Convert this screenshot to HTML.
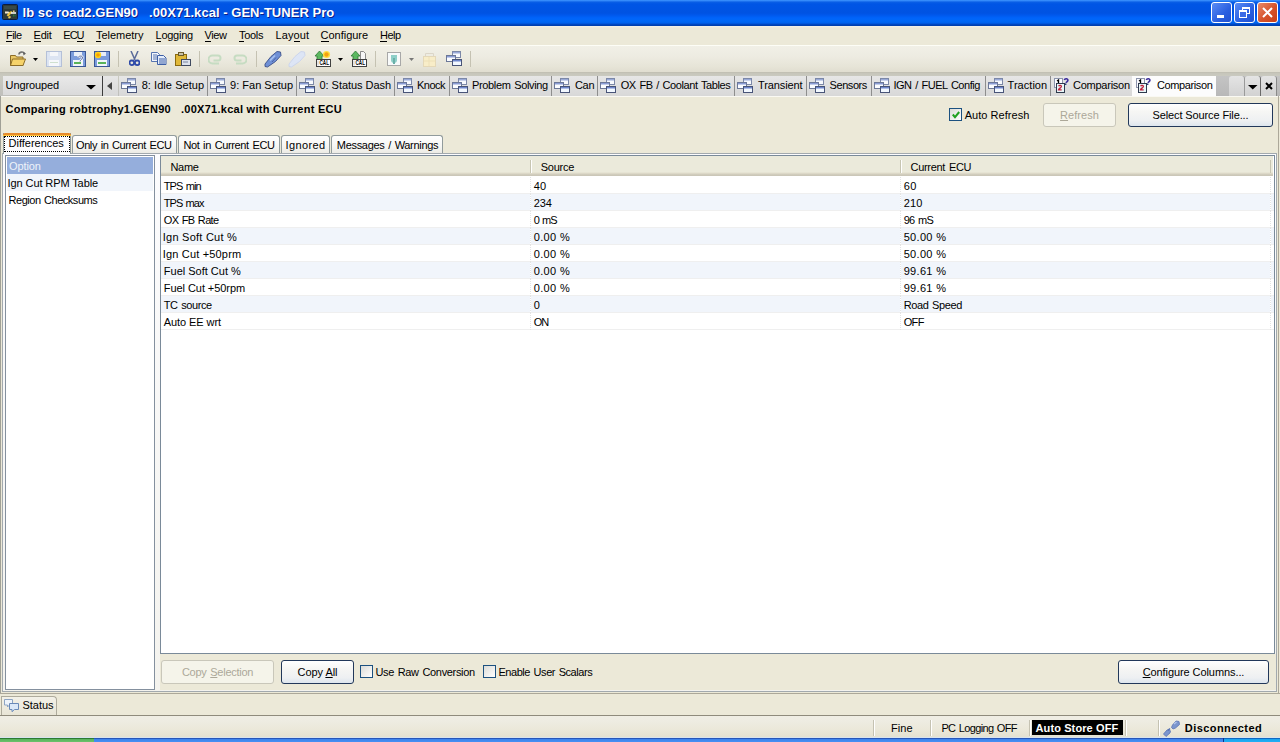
<!DOCTYPE html>
<html><head><meta charset="utf-8">
<style>
*{box-sizing:border-box;margin:0;padding:0}
html,body{width:1280px;height:742px;overflow:hidden}
body{position:relative;background:#ECE9D8;font-family:"Liberation Sans",sans-serif;font-size:11px;color:#000}
.a{position:absolute}
.t{position:absolute;white-space:nowrap;line-height:13px}
#title{left:0;top:0;width:1280px;height:26px;
background:linear-gradient(#3D95FF 0px,#2C80F5 1px,#0A5FE6 2px,#0055E5 4px,#0053E2 13px,#0058EC 15px,#0064FA 18px,#0068F7 21px,#0062EC 23px,#004ED0 24px,#0040B0 25px,#0040B0 26px)}
#menu{left:0;top:26px;width:1280px;height:19px;background:linear-gradient(#F4F3EC 0px,#ECE9D8 2px,#ECE9D8 100%)}
#tool{left:0;top:45px;width:1280px;height:27px;background:linear-gradient(#FDFDF6 0px,#FDFDF6 1px,#F1F0E7 1px,#EDEBE1 12px,#E6E4D7 22px,#E0DDD0 27px)}
#tabstrip{left:0;top:72px;width:1280px;height:24px;background:linear-gradient(#BDBBAE 0px,#C6C5BA 1px,#CACAC0 4px,#C0C0BC 24px)}
.tsep{position:absolute;width:1px;top:0;height:26px}
.mt{top:29px}
.mt u{text-decoration:none;border-bottom:1px solid #000}
.tab{position:absolute;top:76px;height:20px;background:linear-gradient(#E6E6E6,#D8D8D8)}
.tabsep{position:absolute;top:76px;height:20px;width:1px;background:#8E8E8E}
.tabt{position:absolute;top:79px;white-space:nowrap;line-height:13px}
.tico{position:absolute;top:76px;width:20px;height:20px}
.btn{position:absolute;border:1px solid #22385A;border-radius:3px;background:linear-gradient(#FFFFFF,#F6F6F4 35%,#EEF0F2 75%,#DEE6EE);text-align:center;line-height:20px;padding-top:1px}
.btn.dis{border-color:#C9C7BA;background:#F5F4EA;color:#ACA899}
.chk{position:absolute;width:13px;height:13px;border:1px solid #1C5180;background:linear-gradient(135deg,#DCDCD7,#FFFFFF)}
.itab{position:absolute;top:135px;height:18px;border:1px solid #919B9C;border-bottom:none;border-radius:3px 3px 0 0;background:linear-gradient(#FFFFFF,#F6F6F3 60%,#ECEBE5)}
.sbs{position:absolute;top:720px;width:2px;height:16px;border-left:1px solid #C5C2B2;border-right:1px solid #FFFFFF}
.row{position:absolute;left:161px;width:1113px;height:17px;border-bottom:1px solid #EFEFEF}
.row.alt{background:#F1F5FB}
.c{position:absolute;top:3px;white-space:nowrap;line-height:13px}
.vl{position:absolute;top:0;width:1px;height:17px;background:repeating-linear-gradient(#E4E4E4 0 1px,#fff 1px 2px)}
</style></head><body>
<svg width="0" height="0" style="position:absolute"><defs>
<symbol id="win" viewBox="0 0 20 20">
<rect x="8.5" y="2.5" width="8" height="6" fill="#F8FAFE" stroke="#7C88A8"></rect><rect x="9" y="3" width="7" height="1.5" fill="#9AAAD8"></rect>
<rect x="2.5" y="6.5" width="9" height="6" fill="#FAFCFF" stroke="#6C7898"></rect><rect x="3" y="7" width="8" height="1.5" fill="#8A9CD4"></rect>
<rect x="8.5" y="10.5" width="9" height="6" fill="#F2F8FF" stroke="#485478"></rect><rect x="9" y="11" width="8" height="1.5" fill="#6E86CC"></rect>
</symbol>
<symbol id="cmp" viewBox="0 0 20 20">
<rect x="2.5" y="2.5" width="8" height="9" fill="#FAFBFF" stroke="#8C94AC"></rect><path d="M5 5l1.5-1v3" stroke="#000" stroke-width="1.3" fill="none"></path>
<rect x="4.5" y="7.5" width="8" height="9" fill="#E8F6F8" stroke="#2E3A4E"></rect><path d="M6.6 10.2c0.6-1.3 2.9-1.1 2.8 0.3-0.1 1.2-2.6 2-2.9 3.3h3.2" stroke="#C0203A" stroke-width="1.3" fill="none"></path>
<path d="M12.3 4c0.5-1.8 3.8-1.6 3.6 0.4-0.1 1.2-1.6 1.4-2 2.4" stroke="#3A2A9A" stroke-width="1.6" fill="none"></path><rect x="12.8" y="7.5" width="1.6" height="1.4" fill="#1A2A6A"></rect>
</symbol>
</defs></svg>
<!-- ============ TITLE BAR ============ -->
<div id="title" class="a">
 <svg class="a" style="left:2px;top:4px" width="17" height="16"><rect x="0.5" y="0.5" width="15" height="15" rx="1" fill="#2E3A38" stroke="#0A1A40"></rect><rect x="2" y="2" width="12" height="3" fill="#3A4A48"></rect>
<path d="M3 8.5h3l1.5 1" stroke="#F4E8D0" stroke-width="2"></path><path d="M5.5 12l2.5-3 2-1" stroke="#E8C040" stroke-width="2.2"></path><path d="M9 9h5" stroke="#F0F0F0" stroke-width="1.6"></path><path d="M11 7.5l1.5-0.5" stroke="#E8D080" stroke-width="1.5"></path><path d="M6.5 14l2-1.5" stroke="#F0C850" stroke-width="1.6"></path><path d="M11.5 10.5v2M13 10.5v2" stroke="#2A7A3A" stroke-width="1"></path></svg>
 <div class="t" style="left: 22.6px; top: 5px; font: bold 13px / 16px &quot;Liberation Sans&quot;, sans-serif; color: rgb(255, 255, 255); text-shadow: rgb(10, 30, 140) 1px 1px 0px; letter-spacing: 0.037px;">lb sc road2.GEN90 &nbsp; .00X71.kcal - GEN-TUNER Pro</div>
 <div class="a" style="left:1211px;top:2px;width:21px;height:21px;border:1px solid #fff;border-radius:3px;background:linear-gradient(135deg,#5A8CF5,#2A5FE0 60%,#2050D0)"><div class="a" style="left:5px;top:12px;width:7px;height:3px;background:#fff"></div></div>
 <div class="a" style="left:1234px;top:2px;width:21px;height:21px;border:1px solid #fff;border-radius:3px;background:linear-gradient(135deg,#5A8CF5,#2A5FE0 60%,#2050D0)">
   <div class="a" style="left:7px;top:4px;width:8px;height:7px;border:1px solid #fff;border-top-width:2px"></div>
   <div class="a" style="left:4px;top:7px;width:8px;height:8px;border:1px solid #fff;border-top-width:2px;background:#3A6AE6"></div>
 </div>
 <div class="a" style="left:1257px;top:2px;width:21px;height:21px;border:1px solid #fff;border-radius:3px;background:linear-gradient(135deg,#E88A6A,#D6532A 55%,#C8401A)">
   <svg class="a" style="left:3px;top:3px" width="13" height="13"><path d="M2 2L11 11M11 2L2 11" stroke="#fff" stroke-width="2"></path></svg>
 </div>
</div>
<!-- ============ MENU ============ -->
<div id="menu" class="a"></div>
<div class="t mt" style="left: 6px; letter-spacing: -0.536px;"><u>F</u>ile</div>
<div class="t mt" style="left: 33.6px; letter-spacing: -0.233px;"><u>E</u>dit</div>
<div class="t mt" style="left: 63.3px; letter-spacing: -0.99px;">EC<u>U</u></div>
<div class="t mt" style="left: 96px; letter-spacing: -0.022px;"><u>T</u>elemetry</div>
<div class="t mt" style="left: 155.5px; letter-spacing: -0.255px;"><u>L</u>ogging</div>
<div class="t mt" style="left: 204.6px; letter-spacing: -0.433px;"><u>V</u>iew</div>
<div class="t mt" style="left: 239px; letter-spacing: -0.295px;"><u>T</u>ools</div>
<div class="t mt" style="left: 275.4px; letter-spacing: 0.126px;">Lay<u>o</u>ut</div>
<div class="t mt" style="left: 320.6px; letter-spacing: -0.022px;"><u>C</u>onfigure</div>
<div class="t mt" style="left: 380px; letter-spacing: -0.502px;"><u>H</u>elp</div>
<!-- ============ TOOLBAR ============ -->
<div id="tool" class="a"></div>
<div id="toolicons">
<svg class="a" style="left:9px;top:50px" width="18" height="17">
 <path d="M1.5 5.5h5l1 1.5h6.5v8.5h-12.5z" fill="#E9C765" stroke="#8C6D28"></path>
 <path d="M3.5 9h13l-2.5 6.5h-12.5z" fill="#F6D36A" stroke="#8C6D28"></path>
 <path d="M10 4.5c0-2.5 4-3.5 5.5-1" stroke="#707070" stroke-width="1.6" fill="none"></path><path d="M14 2l3 1.5-2.5 2z" fill="#606060"></path>
</svg>
<svg class="a" style="left:33px;top:58px" width="6" height="4"><path d="M0 0H5L2.5 3Z" fill="#000"></path></svg>
<svg class="a" style="left:46px;top:51px" width="16" height="16"><rect x="0.5" y="0.5" width="15" height="15" fill="#DCE4F2" stroke="#B4C0D8"></rect><rect x="4" y="1" width="8" height="4" fill="#F4F6FA"></rect><rect x="3" y="9" width="10" height="6" fill="#F6F8FB"></rect><rect x="4" y="11" width="8" height="1" fill="#CFE0CF"></rect></svg>
<svg class="a" style="left:70px;top:51px" width="16" height="16"><rect x="0.5" y="0.5" width="15" height="15" fill="#7B9CDC" stroke="#3A5796"></rect><rect x="4" y="1" width="8" height="4" fill="#E8EEF8"></rect><rect x="3" y="9" width="10" height="6" fill="#F2F6FA"></rect><rect x="4" y="11" width="7" height="2" fill="#5AB45A"></rect><path d="M8 6.5c1-2 5-2 4.5 0.5-0.3 1.5-2.5 1.8-2.5 3.5" stroke="#fff" stroke-width="2.2" fill="none"></path><path d="M8 6.5c1-2 5-2 4.5 0.5-0.3 1.5-2.5 1.8-2.5 3.5" stroke="#2A3F80" stroke-width="0.8" fill="none"></path></svg>
<svg class="a" style="left:94px;top:51px" width="16" height="16"><rect x="0.5" y="0.5" width="15" height="15" fill="#7B9CDC" stroke="#3A5796"></rect><rect x="4" y="1" width="8" height="4" fill="#E8EEF8"></rect><rect x="3" y="9" width="10" height="6" fill="#F2F6FA"></rect><rect x="4" y="11" width="8" height="2" fill="#5AB45A"></rect><circle cx="4" cy="4" r="3.2" fill="#FFD21A"></circle><circle cx="4" cy="4" r="1.8" fill="#F5A000"></circle></svg>
<div class="a" style="left:118px;top:51px;width:1px;height:16px;background:#C5C2B2"></div>
<svg class="a" style="left:129px;top:51px" width="11" height="15"><path d="M2 0L6 9M9 0L5 9" stroke="#5A6A9A" stroke-width="1.5"></path><circle cx="2.8" cy="11.8" r="2.3" fill="none" stroke="#2F4BA8" stroke-width="1.8"></circle><circle cx="8.2" cy="11.8" r="2.3" fill="none" stroke="#2F4BA8" stroke-width="1.8"></circle></svg>
<svg class="a" style="left:151px;top:52px" width="16" height="13"><path d="M0.5 0.5h6l2 2v7h-8z" fill="#F2F5FB" stroke="#5674B0"></path><path d="M2 3h4M2 5h5M2 7h5" stroke="#5674B0"></path><path d="M6.5 3.5h6l2.5 2.5v6.5h-8.5z" fill="#E6EEFB" stroke="#3D5FA6"></path><path d="M8 7h6M8 9h6M8 11h6" stroke="#3D5FA6"></path></svg>
<svg class="a" style="left:175px;top:52px" width="17" height="14"><rect x="0.5" y="2.5" width="11" height="11" fill="#E0B838" stroke="#8A6A10"></rect><rect x="3.5" y="0.5" width="5" height="3" fill="#C9C2A8" stroke="#6A5A2A"></rect><rect x="6.5" y="7.5" width="9" height="6" fill="#DCE2EC" stroke="#404A60"></rect><path d="M8 10h5" stroke="#7A86A0"></path></svg>
<div class="a" style="left:199px;top:51px;width:1px;height:16px;background:#C5C2B2"></div>
<svg class="a" style="left:208px;top:53px" width="15" height="12"><path d="M11 10.5H4.5a4 4 0 0 1 0-8H10a2.5 2.5 0 0 1 0 5H5.5" stroke="#C6DCC2" stroke-width="2" fill="none"></path></svg>
<svg class="a" style="left:232px;top:53px" width="15" height="12"><path d="M4 10.5h6.5a4 4 0 0 0 0-8H5a2.5 2.5 0 0 0 0 5h4.5" stroke="#C6DCC2" stroke-width="2" fill="none"></path></svg>
<div class="a" style="left:256px;top:51px;width:1px;height:16px;background:#C5C2B2"></div>
<svg class="a" style="left:262px;top:48px" width="24" height="22"><path d="M3 16L9 8.5 15 3.5 18.5 4 19 7.5 13.5 13.5 5.5 19 3 18.5z" fill="#6F90D6" stroke="#3A4E88" stroke-width="0.9"></path><path d="M8 12.5l5-5" stroke="#A8C2F0" stroke-width="1.6"></path><path d="M10 14l4-4.5" stroke="#4A64A8" stroke-width="1"></path></svg>
<svg class="a" style="left:286px;top:48px" width="24" height="22"><path d="M3 16L9 8.5 15 3.5 18.5 4 19 7.5 13.5 13.5 5.5 19 3 18.5z" fill="#DDE5F5" stroke="#C9D4EC" stroke-width="0.9"></path></svg>
<svg class="a" style="left:312px;top:48px" width="24" height="22"><path d="M7.5 3L12 8H10V12H5V8H3z" fill="#5CB860" stroke="#2E7A36" stroke-width="0.8"></path><circle cx="14.5" cy="6.5" r="3.6" fill="#FFE040"></circle><circle cx="14.5" cy="6.5" r="2.2" fill="#F5A010"></circle><rect x="4.5" y="11.5" width="14" height="7" fill="#FFFFFF" stroke="#404040"></rect><path d="M6 12.5v5" stroke="#C8C8C8"></path><text x="7.5" y="17.2" font-family="Liberation Sans" font-size="6.5" font-weight="bold" fill="#000" textLength="9.5" lengthAdjust="spacingAndGlyphs">CAL</text></svg>
<svg class="a" style="left:338px;top:58px" width="6" height="4"><path d="M0 0H5L2.5 3Z" fill="#000"></path></svg>
<svg class="a" style="left:348px;top:48px" width="24" height="22"><path d="M7.5 3L12 8H10V12H5V8H3z" fill="#5CB860" stroke="#2E7A36" stroke-width="0.8"></path><path d="M12.5 3.5h3l2 2v6h-5z" fill="#F6F6F6" stroke="#707070" stroke-width="0.8"></path><rect x="4.5" y="11.5" width="14" height="7" fill="#FFFFFF" stroke="#404040"></rect><path d="M6 12.5v5" stroke="#C8C8C8"></path><text x="7.5" y="17.2" font-family="Liberation Sans" font-size="6.5" font-weight="bold" fill="#000" textLength="9.5" lengthAdjust="spacingAndGlyphs">CAL</text></svg>
<div class="a" style="left:375px;top:51px;width:1px;height:16px;background:#C5C2B2"></div>
<svg class="a" style="left:387px;top:52px" width="15" height="14"><rect x="0.5" y="0.5" width="13" height="13" fill="#F8FAFA" stroke="#A8A8A8"></rect><path d="M4 3v5a3 3 0 0 0 6 0V3z" fill="#8ECFC8"></path><path d="M7 6v6" stroke="#6AB0A8" stroke-width="2"></path></svg>
<svg class="a" style="left:409px;top:58px" width="6" height="4"><path d="M0 0H5L2.5 3Z" fill="#777"></path></svg>
<svg class="a" style="left:423px;top:51px" width="14" height="16"><rect x="0.5" y="5.5" width="12" height="10" fill="#F8EDC8" stroke="#E4D8B8"></rect><path d="M2.5 5.5V2.5h8v3" fill="none" stroke="#DCD6C8"></path><path d="M1 10h11M6 6v9" stroke="#EDE0B8"></path></svg>
<svg class="a" style="left:444px;top:49px" width="20" height="20"><use href="#win" width="20" height="20"></use></svg>
<div class="a" style="left:470px;top:51px;width:1px;height:16px;background:#C5C2B2"></div>
</div>
<!-- ============ TAB STRIP ============ -->
<div id="tabstrip" class="a"></div>
<!-- combo -->
<div class="a" style="left:3px;top:76px;width:99px;height:19px;background:linear-gradient(#E9E9E9,#DADADA)"></div>
<div class="t" style="left: 5.6px; top: 79px; letter-spacing: -0.114px;">Ungrouped</div>
<svg class="a" style="left:86px;top:85px" width="10" height="5"><path d="M0 0H10L5 4.5Z" fill="#000"></path></svg>
<div class="a" style="left:102px;top:76px;width:1px;height:20px;background:#3C3C3C"></div>
<div class="a" style="left:103px;top:76px;width:15px;height:20px;background:linear-gradient(#E6E6E6,#D8D8D8)"></div>
<svg class="a" style="left:107px;top:82px" width="6" height="9"><path d="M5 0V8L0 4Z" fill="#444"></path></svg>
<!--TABS--><div class="tab" style="left:119px;width:88px"></div><div class="tabsep" style="left:207px"></div><svg class="tico" style="left:119px"><use href="#win"></use></svg><div class="tabt" style="left: 141.7px; letter-spacing: 0.054px;">8: Idle Setup</div>
<div class="tab" style="left:208px;width:88px"></div><div class="tabsep" style="left:296px"></div><svg class="tico" style="left:208px"><use href="#win"></use></svg><div class="tabt" style="left: 230px; letter-spacing: 0.012px;">9: Fan Setup</div>
<div class="tab" style="left:297px;width:97px"></div><div class="tabsep" style="left:394px"></div><svg class="tico" style="left:297px"><use href="#win"></use></svg><div class="tabt" style="left: 319.5px; letter-spacing: -0.041px;">0: Status Dash</div>
<div class="tab" style="left:395px;width:54px"></div><div class="tabsep" style="left:449px"></div><svg class="tico" style="left:395px"><use href="#win"></use></svg><div class="tabt" style="left: 417px; letter-spacing: -0.518px;">Knock</div>
<div class="tab" style="left:450px;width:101px"></div><div class="tabsep" style="left:551px"></div><svg class="tico" style="left:450px"><use href="#win"></use></svg><div class="tabt" style="left: 472px; letter-spacing: -0.355px; word-spacing: 1px;">Problem Solving</div>
<div class="tab" style="left:552px;width:45px"></div><div class="tabsep" style="left:597px"></div><svg class="tico" style="left:552px"><use href="#win"></use></svg><div class="tabt" style="left: 575px; letter-spacing: -0.331px;">Can</div>
<div class="tab" style="left:598px;width:136px"></div><div class="tabsep" style="left:734px"></div><svg class="tico" style="left:598px"><use href="#win"></use></svg><div class="tabt" style="left: 620.7px; letter-spacing: -0.416px; word-spacing: 1px;">OX FB / Coolant Tables</div>
<div class="tab" style="left:735px;width:71px"></div><div class="tabsep" style="left:806px"></div><svg class="tico" style="left:735px"><use href="#win"></use></svg><div class="tabt" style="left: 758px; letter-spacing: -0.111px;">Transient</div>
<div class="tab" style="left:807px;width:64px"></div><div class="tabsep" style="left:871px"></div><svg class="tico" style="left:807px"><use href="#win"></use></svg><div class="tabt" style="left: 829.6px; letter-spacing: -0.442px;">Sensors</div>
<div class="tab" style="left:872px;width:113px"></div><div class="tabsep" style="left:985px"></div><svg class="tico" style="left:872px"><use href="#win"></use></svg><div class="tabt" style="left: 893.4px; letter-spacing: -0.455px; word-spacing: 1px;">IGN / FUEL Config</div>
<div class="tab" style="left:986px;width:64px"></div><div class="tabsep" style="left:1050px"></div><svg class="tico" style="left:986px"><use href="#win"></use></svg><div class="tabt" style="left: 1007.6px; letter-spacing: 0.027px;">Traction</div>
<div class="tab" style="left:1051px;width:81px"></div><div class="tabsep" style="left:1132px"></div><svg class="tico" style="left:1052px"><use href="#cmp"></use></svg><div class="tabt" style="left: 1073px; letter-spacing: -0.243px;">Comparison</div>
<div class="a" style="left:1132px;top:76px;width:84px;height:20px;background:#FCFCFC"></div><svg class="tico" style="left:1134px"><use href="#cmp"></use></svg><div class="tabt" style="left: 1157px; letter-spacing: -0.387px;">Comparison</div><!--/TABS-->
<div class="a" style="left:1216px;top:76px;width:64px;height:20px;background:linear-gradient(#C4C4C4,#B8B8B8)"></div>
<div class="a" style="left:1229px;top:76px;width:16px;height:20px;background:linear-gradient(#E4E4E4,#D2D2D2);border-radius:3px 3px 0 0;border-right:1px solid #9A9A9A"></div>
<div class="a" style="left:1245px;top:76px;width:16px;height:20px;background:linear-gradient(#E4E4E4,#D2D2D2);border-radius:3px 3px 0 0;border-right:1px solid #6A6A6A"></div>
<svg class="a" style="left:1248px;top:85px" width="10" height="5"><path d="M0 0H9.5L4.75 4.5Z" fill="#000"></path></svg>
<div class="a" style="left:1261px;top:76px;width:16px;height:20px;background:linear-gradient(#E4E4E4,#D2D2D2);border-radius:3px 3px 0 0;border-right:1px solid #8A8A8A"></div>
<svg class="a" style="left:1265px;top:82px" width="8" height="8"><path d="M1 1L7 7M7 1L1 7" stroke="#000" stroke-width="2"></path></svg>
<!-- ============ CONTENT ============ -->
<div class="a" style="left:0;top:96px;width:1280px;height:1px;background:#FAF9F3"></div>
<div class="a" style="left:0;top:96px;width:1px;height:597px;background:#A0A096"></div>
<div class="t" style="left: 5.6px; top: 103px; font-weight: bold; letter-spacing: 0.272px;">Comparing robtrophy1.GEN90 &nbsp; .00X71.kcal with Current ECU</div>
<div class="chk" style="left:949px;top:108px"></div>
<div class="t" style="left: 964.7px; top: 109px; letter-spacing: 0.038px;">Auto Refresh</div>
<svg class="a" style="left:952px;top:111px" width="8" height="8"><path d="M0.8 3.5L3 6.2L7.2 1" stroke="#21A121" stroke-width="2" fill="none"></path></svg>
<div class="btn dis" style="left: 1043px; top: 103px; width: 73px; height: 24px; letter-spacing: 0.05px;"><u>R</u>efresh</div>
<div class="btn" style="left: 1128px; top: 103px; width: 145px; height: 24px; letter-spacing: -0.114px;">Select Source File...</div>

<!-- tab page -->
<div class="a" style="left:2px;top:153px;width:1275px;height:539px;border:1px solid #A2A9AE;background:linear-gradient(#FCFCFE,#F4F3EE)"></div>
<div id="innertabs">
<div class="itab" style="left:72px;width:105px"></div><div class="t" style="left: 76px; top: 139px; letter-spacing: -0.406px; word-spacing: 1px;">Only in Current ECU</div>
<div class="itab" style="left:178px;width:102px"></div><div class="t" style="left: 183.4px; top: 139px; letter-spacing: -0.365px; word-spacing: 1px;">Not in Current ECU</div>
<div class="itab" style="left:281px;width:49px"></div><div class="t" style="left: 285.6px; top: 139px; letter-spacing: 0.385px;">Ignored</div>
<div class="itab" style="left:331px;width:112px"></div><div class="t" style="left: 336.8px; top: 139px; letter-spacing: -0.314px; word-spacing: 1px;">Messages / Warnings</div>
<div class="a" style="left:3px;top:133px;width:68px;height:21px;border:1px solid #919B9C;border-top:none;border-bottom:none;background:#FCFCFE"></div>
<div class="a" style="left:3px;top:133px;width:68px;height:2px;background:#E68B2C;border-radius:2px 2px 0 0"></div>
<div class="a" style="left:3px;top:135px;width:68px;height:1px;background:#FFC73C"></div>
<div class="a" style="left:4px;top:136px;width:66px;height:16px;border:1px dotted #000"></div>
<div class="t" style="left: 8.6px; top: 137px; letter-spacing: -0.024px;">Differences</div>
</div>

<!-- list -->
<div class="a" style="left:5px;top:155px;width:150px;height:535px;border:1px solid #84909E;background:#fff"></div>
<div class="a" style="left:7px;top:157px;width:146px;height:17px;background:#95AEDC"></div>
<div class="t" style="left: 9px; top: 160px; color: rgb(238, 243, 250); letter-spacing: -0.098px;">Option</div>
<div class="a" style="left:7px;top:174px;width:146px;height:17px;background:#F1F5FB"></div>
<div class="t" style="left: 7.6px; top: 177px; letter-spacing: -0.1px;">Ign Cut RPM Table</div>
<div class="t" style="left: 8.6px; top: 194px; letter-spacing: -0.485px; word-spacing: 1px;">Region Checksums</div>

<!-- grid -->
<div class="a" style="left:160px;top:155px;width:1115px;height:499px;border:1px solid #7A8A99;background:#fff"></div>
<div class="a" style="left:161px;top:156px;width:1112px;height:20px;background:linear-gradient(#EBEADB 0,#EBEADB 16px,#E2DECD 17px,#D6D2C2 18px,#CBC7B8 19px)"></div>
<div class="a" style="left:530px;top:160px;width:1px;height:13px;background:#C7C5B2"></div>
<div class="a" style="left:531px;top:160px;width:1px;height:13px;background:#FFF"></div>
<div class="a" style="left:900px;top:160px;width:1px;height:13px;background:#C7C5B2"></div>
<div class="a" style="left:901px;top:160px;width:1px;height:13px;background:#FFF"></div>
<div class="a" style="left:1270px;top:160px;width:1px;height:13px;background:#C7C5B2"></div>
<div class="t" style="left: 170.5px; top: 161px; letter-spacing: -0.342px;">Name</div>
<div class="t" style="left: 540.7px; top: 161px; letter-spacing: -0.247px;">Source</div>
<div class="t" style="left: 910.5px; top: 161px; letter-spacing: -0.292px; word-spacing: 1px;">Current ECU</div>
<!--ROWS--><div class="row" style="top:177px"><div class="c" style="left: 2.8px; letter-spacing: -0.893px; word-spacing: 1px;">TPS min</div><div class="vl" style="left:369px"></div><div class="c" style="left: 372.7px; letter-spacing: 0.182px;">40</div><div class="vl" style="left:739px"></div><div class="c" style="left: 742.7px; letter-spacing: 0.382px;">60</div><div class="vl" style="left:1109px"></div></div>
<div class="row alt" style="top:194px"><div class="c" style="left: 2.8px; letter-spacing: -0.922px; word-spacing: 1px;">TPS max</div><div class="vl" style="left:369px"></div><div class="c" style="left: 372.7px; letter-spacing: -0.118px;">234</div><div class="vl" style="left:739px"></div><div class="c" style="left: 742.7px; letter-spacing: 0.182px;">210</div><div class="vl" style="left:1109px"></div></div>
<div class="row" style="top:211px"><div class="c" style="left: 2.8px; letter-spacing: -0.664px; word-spacing: 1px;">OX FB Rate</div><div class="vl" style="left:369px"></div><div class="c" style="left: 372.7px; letter-spacing: -0.912px; word-spacing: 1px;">0 mS</div><div class="vl" style="left:739px"></div><div class="c" style="left: 742.7px; letter-spacing: -0.689px; word-spacing: 1px;">96 mS</div><div class="vl" style="left:1109px"></div></div>
<div class="row alt" style="top:228px"><div class="c" style="left: 1.8px; letter-spacing: 0.235px;">Ign Soft Cut %</div><div class="vl" style="left:369px"></div><div class="c" style="left: 372.7px; letter-spacing: 0.367px;">0.00 %</div><div class="vl" style="left:739px"></div><div class="c" style="left: 742.7px; letter-spacing: 0.319px;">50.00 %</div><div class="vl" style="left:1109px"></div></div>
<div class="row" style="top:245px"><div class="c" style="left: 1.8px; letter-spacing: 0.172px;">Ign Cut +50prm</div><div class="vl" style="left:369px"></div><div class="c" style="left: 372.7px; letter-spacing: 0.367px;">0.00 %</div><div class="vl" style="left:739px"></div><div class="c" style="left: 742.7px; letter-spacing: 0.319px;">50.00 %</div><div class="vl" style="left:1109px"></div></div>
<div class="row alt" style="top:262px"><div class="c" style="left: 2.8px; letter-spacing: -0.004px;">Fuel Soft Cut %</div><div class="vl" style="left:369px"></div><div class="c" style="left: 372.7px; letter-spacing: 0.367px;">0.00 %</div><div class="vl" style="left:739px"></div><div class="c" style="left: 742.7px; letter-spacing: 0.319px;">99.61 %</div><div class="vl" style="left:1109px"></div></div>
<div class="row" style="top:279px"><div class="c" style="left: 2.8px; letter-spacing: -0.062px;">Fuel Cut +50rpm</div><div class="vl" style="left:369px"></div><div class="c" style="left: 372.7px; letter-spacing: 0.367px;">0.00 %</div><div class="vl" style="left:739px"></div><div class="c" style="left: 742.7px; letter-spacing: 0.319px;">99.61 %</div><div class="vl" style="left:1109px"></div></div>
<div class="row alt" style="top:296px"><div class="c" style="left: 2.8px; letter-spacing: -0.427px; word-spacing: 1px;">TC source</div><div class="vl" style="left:369px"></div><div class="c" style="left: 372.7px;">0</div><div class="vl" style="left:739px"></div><div class="c" style="left: 742.7px; letter-spacing: -0.394px; word-spacing: 1px;">Road Speed</div><div class="vl" style="left:1109px"></div></div>
<div class="row" style="top:313px"><div class="c" style="left: 2.8px; letter-spacing: -0.082px;">Auto EE wrt</div><div class="vl" style="left:369px"></div><div class="c" style="left: 372.7px; letter-spacing: -0.956px;">ON</div><div class="vl" style="left:739px"></div><div class="c" style="left: 742.7px; letter-spacing: -0.638px;">OFF</div><div class="vl" style="left:1109px"></div></div><!--/ROWS-->

<!-- bottom buttons -->
<div class="a" style="left:160px;top:654px;width:1116px;height:36px;background:#ECE9D8"></div>
<div class="btn dis" style="left: 161px; top: 660px; width: 113px; height: 24px; letter-spacing: -0.271px; word-spacing: 1px;">Copy <u>S</u>election</div>
<div class="btn" style="left: 281px; top: 660px; width: 73px; height: 24px; letter-spacing: -0.074px;">Copy <u>A</u>ll</div>
<div class="chk" style="left:360px;top:665px"></div>
<div class="t" style="left: 375.4px; top: 666px; letter-spacing: -0.329px; word-spacing: 1px;">Use Raw Conversion</div>
<div class="chk" style="left:483px;top:665px"></div>
<div class="t" style="left: 498.4px; top: 666px; letter-spacing: -0.443px; word-spacing: 1px;">Enable User Scalars</div>
<div class="btn" style="left: 1118px; top: 660px; width: 151px; height: 24px; letter-spacing: -0.083px;"><u>C</u>onfigure Columns...</div>

<!-- status tab area -->
<div class="a" style="left:0;top:693px;width:1280px;height:1px;background:#ACA899"></div>
<div class="a" style="left:1278px;top:96px;width:1px;height:598px;background:#ACA899"></div>
<div class="a" style="left:1px;top:696px;width:56px;height:19px;border:1px solid #AEAB9C;border-bottom:none;border-radius:0 4px 0 0;background:linear-gradient(#F3F1E8,#E8E5D6)"></div>
<div class="t" style="left: 22.5px; top: 699px; letter-spacing: -0.037px;">Status</div>
<!-- status bar -->
<div class="a" style="left:0;top:715px;width:1280px;height:1px;background:#8F8B7C"></div>
<div class="a" style="left:0;top:716px;width:1280px;height:21px;background:linear-gradient(#F0EEE4 0,#EEECE2 5px,#EBE8D9 14px,#E4E1D1 21px)"></div>
<div class="a" style="left:0;top:737px;width:1280px;height:1px;background:#F4F3EA"></div>
<div class="t" style="left: 891px; top: 722px; letter-spacing: 0.073px;">Fine</div>
<div class="t" style="left: 941.4px; top: 722px; letter-spacing: -0.648px; word-spacing: 1px;">PC Logging OFF</div>
<div class="a" style="left:1032px;top:720px;width:91px;height:15px;background:#000"></div>
<div class="t" style="left: 1035.5px; top: 722px; color: rgb(255, 255, 255); font-weight: bold; letter-spacing: 0.111px;">Auto Store OFF</div>
<div class="t" style="left: 1184.8px; top: 722px; font-weight: bold; letter-spacing: 0.436px;">Disconnected</div>
<div class="sbs" style="left:873px"></div><div class="sbs" style="left:930px"></div><div class="sbs" style="left:1029px"></div><div class="sbs" style="left:1125px"></div><div class="sbs" style="left:1158px"></div>
<svg class="a" style="left:1162px;top:719px" width="19" height="18"><path d="M1.5 15l3.5-4 2-0.5 1.5 1.5-0.5 2-4 3.5z" fill="#7C96CE" stroke="#5A74B4" stroke-width="0.8"></path><path d="M6 11.5l2-2" stroke="#5A74B4" stroke-width="1.6"></path><path d="M9.5 8.5l1-2.5 3.5-4 3 0.5 0.5 3-4 3.5-2.5 1z" fill="#7C96CE" stroke="#5A74B4" stroke-width="0.8"></path><path d="M12 5l2.5-2" stroke="#B4C6EC" stroke-width="1.2"></path></svg>
<svg class="a" style="left:3px;top:698px" width="17" height="14"><path d="M1.5 1.5h8v5.5h-3l-2 2v-2h-3z" fill="#EEF4FB" stroke="#8CA4C4"></path><path d="M6.5 5.5h9v6h-4l-2.5 2.2v-2.2h-2.5z" fill="#DCE9F8" stroke="#6A8AB8"></path></svg>
<!-- taskbar -->
<div class="a" style="left:0;top:737px;width:1280px;height:1px;background:#D8E4EE"></div>
<div class="a" style="left:0;top:738px;width:94px;height:4px;background:linear-gradient(#2E7A32 0,#2E7A32 1px,#58B25A 1px,#6CC26C 4px)"></div>
<div class="a" style="left:94px;top:738px;width:1129px;height:4px;background:linear-gradient(#2856B8 0,#2856B8 1px,#3C82EA 1px,#4690F4 4px)"></div>
<div class="a" style="left:1223px;top:738px;width:1px;height:4px;background:#10308A"></div>
<div class="a" style="left:1224px;top:738px;width:56px;height:4px;background:linear-gradient(#1068C0 0,#1068C0 1px,#1AA2EE 1px,#22B0F4 4px)"></div>

</body></html>
